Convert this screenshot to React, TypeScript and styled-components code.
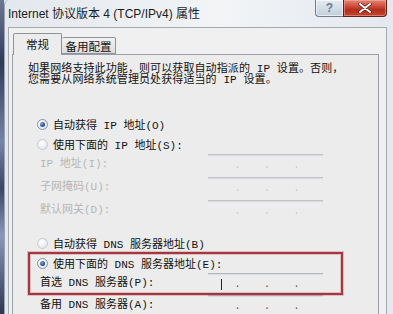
import React from "react";
import styled, { createGlobalStyle } from "styled-components";

const Global = createGlobalStyle`
  html, body { margin: 0; padding: 0; overflow: hidden; background: #dfe5ec; }
  * { box-sizing: border-box; }
`;

const Root = styled.div`
  width: 393px;
  height: 314px;
  overflow: hidden;
  display: flex;
  background: #dfe5ec;
`;

const LeftEdge = styled.div`
  width: 4px;
  flex: none;
  background: linear-gradient(180deg, #6c7893 0%, #2f3a57 20%, #7585a8 45%, #3a4668 60%, #8a98bb 75%, #2d3652 100%);
`;

const Window = styled.div`
  flex: 1;
  min-width: 0;
  display: flex;
  flex-direction: column;
  border-left: 1px solid #9aa3ae;
  border-top-left-radius: 5px;
  background: linear-gradient(90deg, #e3e8ee 0%, #eef1f4 40%, #f2f4f6 55%, #e4e9ef 100%);
`;

const TitleBar = styled.div`
  height: 27px;
  flex: none;
  display: flex;
  align-items: flex-start;
  padding-left: 3px;
  padding-right: 6px;
`;

const Title = styled.div`
  flex: 1;
  padding-top: 7px;
  font-family: "Liberation Sans", "Noto Sans CJK SC", sans-serif;
  font-size: 12px;
  line-height: 14px;
  color: #1c1c1c;
  white-space: nowrap;
`;

const CaptionButtons = styled.div`
  display: flex;
  height: 17px;
`;

const HelpButton = styled.div`
  width: 28px;
  height: 17px;
  border: 1px solid #707b8a;
  border-top: none;
  border-right: none;
  border-bottom-left-radius: 4px;
  background: linear-gradient(180deg, #e4eaf1 0%, #d3dce7 50%, #c3cfdd 100%);
  display: flex;
  align-items: center;
  justify-content: center;
  font-family: "Liberation Sans", sans-serif;
  font-weight: bold;
  font-size: 12px;
  color: #6a7a92;
  box-shadow: inset 0 0 0 1px rgba(255, 255, 255, 0.6);
`;

const CloseButton = styled.div`
  width: 44px;
  height: 17px;
  border: 1px solid #5e2119;
  border-top: none;
  border-bottom-right-radius: 4px;
  background: linear-gradient(180deg, #e0897a 0%, #cf4a37 40%, #b22f1d 62%, #c34631 100%);
  display: flex;
  align-items: center;
  justify-content: center;
  box-shadow: inset 0 0 0 1px rgba(255, 190, 175, 0.45);
`;

const Client = styled.div`
  flex: 1;
  margin: 0 6px 0 3px;
  border: 1px solid #a4a9b0;
  border-bottom: none;
  background: #f0f0f0;
  padding: 5px 7px 0 3px;
  display: flex;
  flex-direction: column;
  min-height: 0;
`;

const TabRow = styled.div`
  height: 21px;
  flex: none;
  display: flex;
  align-items: flex-end;
  padding-left: 1px;
`;

const Tab = styled.div<{ $active?: boolean; $w: number }>`
  width: ${(p) => p.$w}px;
  height: ${(p) => (p.$active ? 22 : 17)}px;
  margin-bottom: ${(p) => (p.$active ? -1 : 0)}px;
  position: relative;
  z-index: ${(p) => (p.$active ? 2 : 1)};
  border: 1px solid #8e929b;
  border-bottom: ${(p) => (p.$active ? "none" : "1px solid #8e929b")};
  border-left: ${(p) => (p.$active ? "1px solid #8e929b" : "none")};
  border-radius: 2px 2px 0 0;
  background: ${(p) =>
    p.$active ? "#ececec" : "linear-gradient(180deg, #f3f3f3 0%, #e8e8e8 50%, #dcdcdc 100%)"};
  display: flex;
  justify-content: center;
  align-items: ${(p) => (p.$active ? "flex-start" : "center")};
  padding-top: ${(p) => (p.$active ? 3 : 0)}px;
  font-family: "Noto Sans CJK SC", sans-serif;
  font-size: 11.5px;
  line-height: 14px;
  color: #151515;
`;

const Panel = styled.div`
  flex: 1;
  position: relative;
  border: 1px solid #9a9ea6;
  border-bottom: none;
  background: #ececec;
  padding: 9px 0 0 15px;
  font-family: "Liberation Mono", "Noto Sans CJK SC", monospace;
  font-size: 11px;
  color: #111;
`;

const Intro = styled.p`
  margin: 0;
  line-height: 11px;
  letter-spacing: 0.1px;
  white-space: nowrap;
`;

const Group = styled.div<{ $mt: number }>`
  margin-top: ${(p) => p.$mt}px;
  display: flex;
  flex-direction: column;
`;

const RadioRow = styled.div`
  height: 20px;
  display: flex;
  align-items: center;
  gap: 5px;
  padding-left: 9px;
  white-space: nowrap;
`;

const RadioDot = styled.span<{ $checked?: boolean }>`
  width: 11px;
  height: 11px;
  flex: none;
  border-radius: 50%;
  border: 1px solid ${(p) => (p.$checked ? "#8393ad" : "#c6cad1")};
  background: radial-gradient(circle at 40% 35%, #ffffff 0%, #eef0f3 50%, #d9dde4 100%);
  display: flex;
  align-items: center;
  justify-content: center;
  &::after {
    content: "";
    width: 5px;
    height: 5px;
    border-radius: 50%;
    display: ${(p) => (p.$checked ? "block" : "none")};
    background: radial-gradient(circle at 35% 35%, #7ea4de 0%, #2c5197 60%, #1c3668 100%);
  }
`;

const FieldRow = styled.div<{ $h: number }>`
  height: ${(p) => p.$h}px;
  display: flex;
  align-items: flex-start;
  padding-left: 12px;
  white-space: nowrap;
`;

const FieldLabel = styled.span<{ $disabled?: boolean }>`
  width: 168px;
  flex: none;
  line-height: 20px;
  color: ${(p) => (p.$disabled ? "#b6b6b6" : "#111")};
`;

const IpField = styled.div<{ $disabled?: boolean }>`
  width: 115px;
  height: 20px;
  flex: none;
  border-top: 1px solid ${(p) => (p.$disabled ? "#bfc2c9" : "#b4b8c1")};
  box-shadow: inset 0 1px 0 #d9dbe0;
  display: flex;
  align-items: center;
  padding-top: 2px;
  color: ${(p) => (p.$disabled ? "#c4c4c4" : "#555")};
`;

const Segment = styled.span`
  flex: 1;
  display: flex;
  justify-content: center;
  align-items: center;
  height: 14px;
`;

const Dot = styled.span`
  width: 3px;
  text-align: center;
  line-height: 12px;
  font-size: 10px;
`;

const Caret = styled.span`
  width: 1px;
  height: 11px;
  background: #222;
`;

const Highlight = styled.div`
  position: absolute;
  left: 15px;
  top: 197px;
  width: 315px;
  height: 43px;
  border: 2px solid #a63740;
  box-shadow: 0 0 0 1px rgba(190, 110, 115, 0.35), inset 0 0 0 1px rgba(190, 110, 115, 0.35);
  pointer-events: none;
`;

function Ip({ disabled, caret }: { disabled?: boolean; caret?: boolean }) {
  return (
    <IpField $disabled={disabled}>
      <Segment>{caret ? <Caret /> : null}</Segment>
      <Dot>.</Dot>
      <Segment />
      <Dot>.</Dot>
      <Segment />
      <Dot>.</Dot>
      <Segment />
    </IpField>
  );
}

export default function App() {
  return (
    <>
      <Global />
      <Root>
        <LeftEdge />
        <Window>
          <TitleBar>
            <Title>Internet 协议版本 4 (TCP/IPv4) 属性</Title>
            <CaptionButtons>
              <HelpButton>?</HelpButton>
              <CloseButton>
                <svg width="14" height="10" viewBox="0 0 14 10">
                  <path d="M2 1 L12 9 M12 1 L2 9" stroke="#5a1a12" strokeWidth="3.4" strokeLinecap="round" />
                  <path d="M2 1 L12 9 M12 1 L2 9" stroke="#ffffff" strokeWidth="2" strokeLinecap="round" />
                </svg>
              </CloseButton>
            </CaptionButtons>
          </TitleBar>
          <Client>
            <TabRow>
              <Tab $active $w={49}>常规</Tab>
              <Tab $w={54}>备用配置</Tab>
            </TabRow>
            <Panel>
              <Intro>
                如果网络支持此功能，则可以获取自动指派的 IP 设置。否则，
                <br />
                您需要从网络系统管理员处获得适当的 IP 设置。
              </Intro>
              <Group $mt={28}>
                <RadioRow>
                  <RadioDot $checked />
                  自动获得 IP 地址(O)
                </RadioRow>
                <RadioRow>
                  <RadioDot />
                  使用下面的 IP 地址(S):
                </RadioRow>
                <FieldRow $h={23}>
                  <FieldLabel $disabled>IP 地址(I):</FieldLabel>
                  <Ip disabled />
                </FieldRow>
                <FieldRow $h={23}>
                  <FieldLabel $disabled>子网掩码(U):</FieldLabel>
                  <Ip disabled />
                </FieldRow>
                <FieldRow $h={23}>
                  <FieldLabel $disabled>默认网关(D):</FieldLabel>
                  <Ip disabled />
                </FieldRow>
              </Group>
              <Group $mt={10}>
                <RadioRow>
                  <RadioDot />
                  自动获得 DNS 服务器地址(B)
                </RadioRow>
                <RadioRow>
                  <RadioDot $checked />
                  使用下面的 DNS 服务器地址(E):
                </RadioRow>
                <FieldRow $h={22}>
                  <FieldLabel>首选 DNS 服务器(P):</FieldLabel>
                  <Ip caret />
                </FieldRow>
                <FieldRow $h={22}>
                  <FieldLabel>备用 DNS 服务器(A):</FieldLabel>
                  <Ip />
                </FieldRow>
              </Group>
              <Highlight />
            </Panel>
          </Client>
        </Window>
      </Root>
    </>
  );
}
